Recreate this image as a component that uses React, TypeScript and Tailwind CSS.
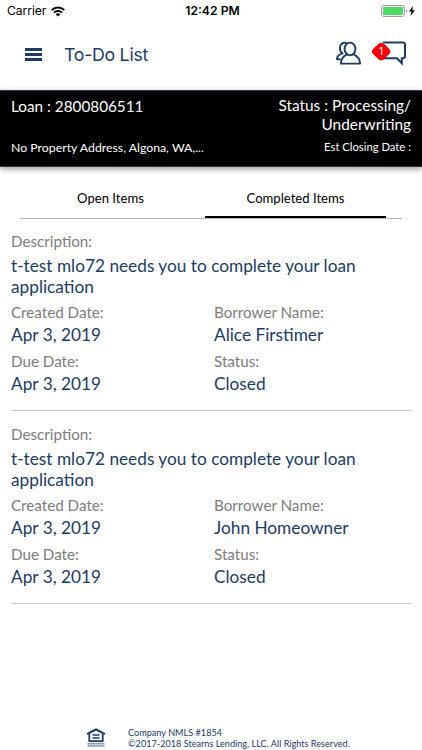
interface TodoItem {
  description: string
  createdDate: string
  borrower: string
  dueDate: string
  status: string
}

const items: TodoItem[] = [
  {
    description: "t-test mlo72 needs you to complete your loan application",
    createdDate: "Apr 3, 2019",
    borrower: "Alice Firstimer",
    dueDate: "Apr 3, 2019",
    status: "Closed",
  },
  {
    description: "t-test mlo72 needs you to complete your loan application",
    createdDate: "Apr 3, 2019",
    borrower: "John Homeowner",
    dueDate: "Apr 3, 2019",
    status: "Closed",
  },
]

const StatusBar = () => (
  <div className="grid h-[22px] grid-cols-3 items-center px-[7px] font-['Inter',sans-serif] text-[12.2px] leading-[22px] text-black">
    <div className="flex items-center gap-[6px]">
      <span className="w-[38px] tracking-[-0.1px]">Carrier</span>
      <svg width="14" height="11" viewBox="0 0 14 11" fill="none" stroke="#000" strokeWidth="1.9">
        <path d="M0.7 4.1a9 9 0 0 1 12.6 0" />
        <path d="M2.9 6.6a6 6 0 0 1 8.2 0" />
        <path d="M7 10.6 4.7 8.3a3.3 3.3 0 0 1 4.6 0z" fill="#000" stroke="none" />
      </svg>
    </div>
    <span className="pl-[3px] text-center font-semibold whitespace-nowrap">12:42 PM</span>
    <div className="flex items-center justify-end">
      <svg width="34" height="12" viewBox="0 0 34 12">
        <rect x="0.5" y="0.5" width="23" height="11" rx="2.6" fill="#fff" stroke="#a0a0a0" />
        <rect x="2" y="2" width="20" height="8" rx="1.2" fill="#4cd964" />
        <path d="M25 4v4a2.2 2.2 0 0 0 0-4z" fill="#a0a0a0" />
        <path d="M32 1 28 6.600h2.400L29.500 11l4.400-5.800h-2.500z" fill="#000" />
      </svg>
    </div>
  </div>
)

const Header = () => (
  <header className="flex h-[68px] items-center pr-[14px] pb-[5px] pl-[25px]">
    <div className="flex w-[17px] flex-col gap-[2px] pt-px">
      <span className="h-[3px] bg-[#1d3c63]" />
      <span className="h-[3px] bg-[#1d3c63]" />
      <span className="h-[3px] bg-[#1d3c63]" />
    </div>
    <h1 className="ml-[22px] flex-1 pt-[3px] font-['Inter',sans-serif] text-[17.8px] tracking-[-0.3px] text-[#1d3c63]">To-Do List</h1>
    <svg width="26" height="25" viewBox="0 0 26 25" fill="none" stroke="#1d3c63" strokeWidth="1.9" strokeLinejoin="round">
      <path d="M10.500 2.200C6.500 .8 3.900 3.500 3.900 7c0 2.400 1 4.400 2.600 5.400C2.800 13.500 1.100 15 .9 18.200h3.800" />
      <ellipse cx="14" cy="7.900" rx="5.400" ry="6.300" />
      <path d="M11 13.400c-3.700 1.700-5.900 3.700-6.100 9.200h19.200c-.2-5.500-2.700-7.500-6.600-9.200" />
    </svg>
    <div className="relative ml-[10px] h-[25px] w-[36px]">
      <svg width="36" height="25" viewBox="0 0 36 25" fill="none" stroke="#1d3c63" strokeWidth="2" strokeLinejoin="miter">
        <path d="M11 1.400h20a2 2 0 0 1 2 2v11.600a2.300 2.300 0 0 1-2.300 2.300h-.900v5l-4.900-5H11" />
      </svg>
      <svg className="absolute top-[1px] left-0" width="20" height="20" viewBox="0 0 20 20">
        <path d="M6 2.200C8.200 .1 10.200 .1 12.400 2.200l4.500 4.200c2.100 2.100 2.100 4.100 0 6.200l-4.500 4.200c-2.200 2.100-4.200 2.100-6.400 0L1.500 12.600c-2.100-2.100-2.100-4.100 0-6.200z" fill="#f80008" />
      </svg>
      <span className="absolute top-[1px] left-0 w-[18px] text-center font-['Inter',sans-serif] text-[10px] leading-[19px] text-white">1</span>
    </div>
  </header>
)

const LoanBanner = () => (
  <section className="flex h-[77px] justify-between border-y border-[#263d50] bg-black px-[11px] text-white shadow-[0_2px_6px_rgba(0,0,0,0.4)]">
    <div className="flex flex-col pt-[5px]">
      <p className="text-[15.3px] leading-[20px]">Loan : 2800806511</p>
      <p className="mt-[22px] text-[12.3px] leading-[20px]">No Property Address, Algona, WA,...</p>
    </div>
    <div className="flex flex-col pt-[5px] text-right">
      <p className="text-[15.4px] leading-[19px]">
        Status : Processing/
        <br />
        Underwriting
      </p>
      <p className="mt-[3px] text-[11.25px] leading-[20px]">Est Closing Date :</p>
    </div>
  </section>
)

const Tabs = () => (
  <nav className="mx-[20px] mt-[16px] flex h-[36px] border-b border-[#b5b5b5] text-center text-[13.1px] text-black">
    <button className="flex w-[181px] justify-center pt-[5px] leading-[20px]">Open Items</button>
    <button className="mx-[4px] flex w-[181px] justify-center border-b-2 border-black pt-[5px] leading-[20px]">Completed Items</button>
  </nav>
)

const Field = ({ label, value }: { label: string; value: string }) => (
  <div>
    <p className="text-[15.2px] leading-[20px] text-[#7d7d7d]">{label}</p>
    <p className="mt-[2px] text-[17.25px] leading-[21px] text-[#1d3c63]">{value}</p>
  </div>
)

const TodoCard = ({ item }: { item: TodoItem }) => (
  <li className="mx-[11px] h-[193px] border-b border-[#cacad3] pt-[13px]">
    <p className="text-[15.2px] leading-[20px] text-[#7d7d7d]">Description:</p>
    <p className="mt-[4px] text-[17.25px] leading-[21px] text-[#1d3c63]">{item.description}</p>
    <div className="mt-[5px] grid grid-cols-[203px_1fr] gap-y-[5.5px]">
      <Field label="Created Date:" value={item.createdDate} />
      <Field label="Borrower Name:" value={item.borrower} />
      <Field label="Due Date:" value={item.dueDate} />
      <Field label="Status:" value={item.status} />
    </div>
  </li>
)

const Footer = () => (
  <footer className="mt-auto flex items-center pb-px pl-[86px] text-[#1d3c63]">
    <svg width="20" height="20" viewBox="0 0 20 20" fill="none" stroke="#1d3c63">
      <path d="M1 6.200 10 1.500l9 4.700" strokeWidth="2" />
      <path d="M3.300 6v7.200h13.400V6" strokeWidth="1.800" />
      <path d="M6.500 7h7M6.500 10h7" strokeWidth="1.500" />
      <path d="M1.500 15.700h17M1.500 18h17" strokeWidth="1.600" strokeDasharray="2.200 .4" opacity="0.6" />
    </svg>
    <p className="ml-[22px] text-[9.15px] leading-[11px]">
      Company NMLS #1854
      <br />
      ©2017-2018 Stearns Lending, LLC. All Rights Reserved.
    </p>
  </footer>
)

const App = () => {
  return (
    <div className="flex h-[750px] w-[422px] flex-col overflow-hidden bg-white font-['Lato',sans-serif]">
      <StatusBar />
      <Header />
      <LoanBanner />
      <Tabs />
      <ul className="-mt-px">
        {items.map((item) => (
          <TodoCard key={item.borrower} item={item} />
        ))}
      </ul>
      <Footer />
    </div>
  )
}

export default App
